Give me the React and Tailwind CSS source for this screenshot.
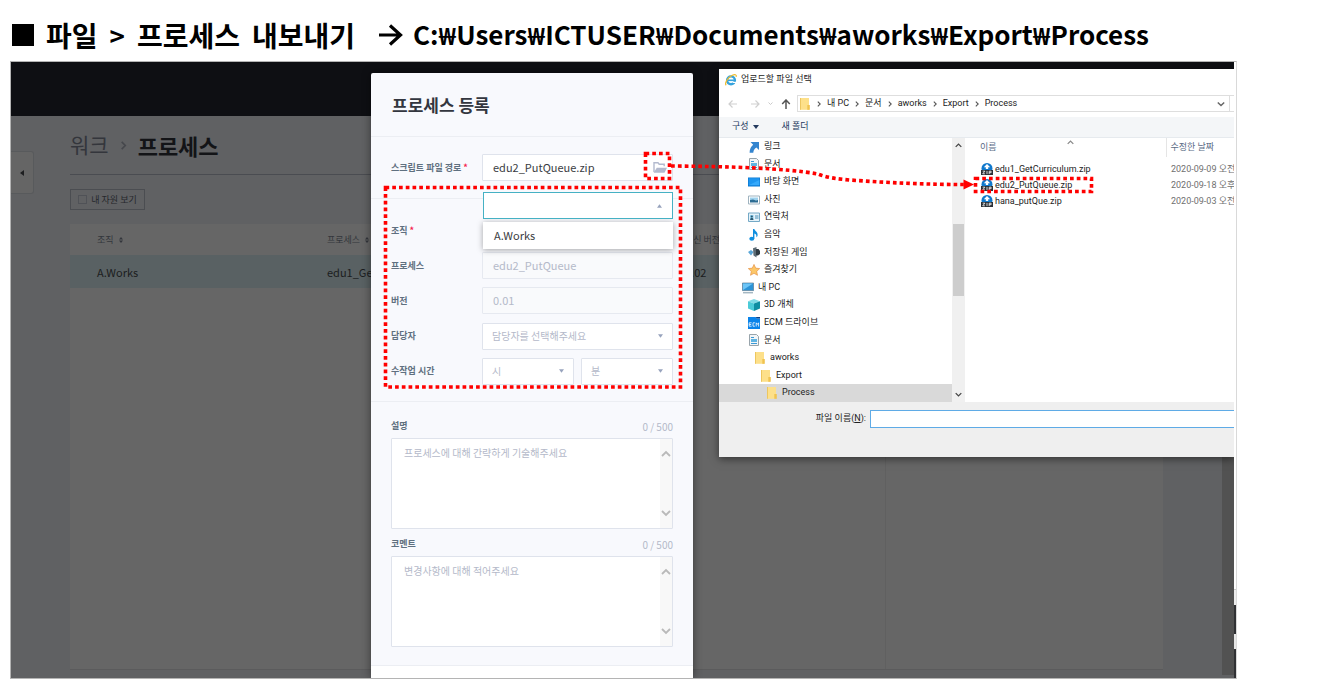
import React from "react";

const TREE = [
  { name: "링크", icon: "link", pad: "pl-[29px]" },
  { name: "문서", icon: "doc", pad: "pl-[29px]" },
  { name: "바탕 화면", icon: "desktop", pad: "pl-[29px]" },
  { name: "사진", icon: "picture", pad: "pl-[29px]" },
  { name: "연락처", icon: "contact", pad: "pl-[29px]" },
  { name: "음악", icon: "music", pad: "pl-[29px]" },
  { name: "저장된 게임", icon: "game", pad: "pl-[29px]" },
  { name: "즐겨찾기", icon: "star", pad: "pl-[29px]" },
  { name: "내 PC", icon: "pc", pad: "pl-[23px]" },
  { name: "3D 개체", icon: "cube", pad: "pl-[29px]" },
  { name: "ECM 드라이브", icon: "ecm", pad: "pl-[29px]" },
  { name: "문서", icon: "doc", pad: "pl-[29px]" },
  { name: "aworks", icon: "folder", pad: "pl-[35px]" },
  { name: "Export", icon: "folder", pad: "pl-[41px]" },
  { name: "Process", icon: "folder", pad: "pl-[47px]", selected: true },
];

const FILES = [
  { name: "edu1_GetCurriculum.zip", date: "2020-09-09 오전" },
  { name: "edu2_PutQueue.zip", date: "2020-09-18 오후" },
  { name: "hana_putQue.zip", date: "2020-09-03 오전" },
];

const PATH = ["내 PC", "문서", "aworks", "Export", "Process"];

const EXPORT_PATH = ["C:", "Users", "ICTUSER", "Documents", "aworks", "Export", "Process"];

function TreeIcon({ kind }) {
  return (
    <svg viewBox="0 0 12 12" className="size-3 shrink-0" aria-hidden="true">
      {kind === "link" && (
        <path d="M2.500 1H11v8L8.400 6.600C6.300 8 5.500 9.500 5.300 11.800H1.600C1.600 8 3 5.600 5.200 3.800Z" fill="#3485cf" />
      )}
      {kind === "doc" && (
        <g>
          <path d="M1.500.5h7l2 2v9h-9Z" fill="#f2f5f7" stroke="#98a4ab" strokeWidth="1" />
          <path d="M3 3.500h3M3 9.500h6" stroke="#3b9ad6" strokeWidth="1" />
          <path d="M3 5h6v3H3Z" fill="#5fb4e2" />
        </g>
      )}
      {kind === "desktop" && (
        <g>
          <path d="M0 1.500h12v9H0Z" fill="#0a78d0" />
          <path d="M.7 2.200h10.600v7H.7Z" fill="#1e96f0" />
          <path d="M.7 9.200 11.300 4v5.200Z" fill="#35a9fb" />
        </g>
      )}
      {kind === "picture" && (
        <g>
          <path d="M.5 2h11v8H.5Z" fill="#fff" stroke="#9fb3bf" />
          <path d="M2 3.500h8v3H2Z" fill="#9fd2ee" />
          <path d="M2 8.500V6l3-.5 3 1 2-.5v2.500Z" fill="#2c6c93" />
        </g>
      )}
      {kind === "contact" && (
        <g>
          <path d="M.5 2h11v8.500H.5Z" fill="#e5f2f9" stroke="#74a9c6" />
          <path d="M2 4h3.500v5H2Z" fill="#8fd0ee" />
          <circle cx="3.800" cy="5.500" r="1.100" fill="#2d5870" />
          <path d="M2.200 9c0-3 3.200-3 3.200 0Z" fill="#2d5870" />
          <path d="M7 5h3.500M7 7h3.500" stroke="#4a90b8" />
        </g>
      )}
      {kind === "music" && (
        <g fill="#0f8fe0">
          <ellipse cx="3.800" cy="9.700" rx="2.500" ry="2" />
          <path d="M5 0h1.400c.2 2 3.600 2.800 3.200 6.200-.1 1-.6 1.600-1.200 2.100.3-2.200-.4-3.300-2-3.900v5.300H5Z" />
        </g>
      )}
      {kind === "game" && (
        <g>
          <path d="M0 6l3-2 2.500 2L3 9.500Z" fill="#5aa7d8" />
          <path d="M5 2.200 8.500 1v10.500L5.500 9.500Z" fill="#5c6b75" />
          <path d="M8 3h2.500L12 5v3l-2 1.500H8Z" fill="#2e3a42" />
        </g>
      )}
      {kind === "star" && (
        <path d="m6 .4 1.700 3.700 4 .5-3 2.700.8 4L6 9.300 2.500 11.300l.8-4-3-2.700 4-.5Z" fill="#fcc768" stroke="#e0883a" strokeWidth=".6" />
      )}
      {kind === "pc" && (
        <g>
          <path d="M.4 1h11.200v7.600H.4Z" fill="#2c93d6" stroke="#5f7d90" strokeWidth=".7" />
          <path d="M1 1.500h10L1 8Z" fill="#6cc5f7" />
          <path d="M1 10.800h10" stroke="#7f99a8" strokeWidth="1" />
        </g>
      )}
      {kind === "cube" && (
        <g>
          <path d="M0 2.200 6 0l6 2.200L6 4.500Z" fill="#7fdbe6" />
          <path d="M0 2.200 6 4.500V12L0 9.600Z" fill="#4ccbd8" />
          <path d="M12 2.200 6 4.500V12l6-2.400Z" fill="#0e8ea2" />
        </g>
      )}
      {kind === "ecm" && (
        <g>
          <path d="M0 0h7.500L9 1.500h3V12H0Z" fill="#0a84ea" />
          <path d="M7.500 0H12v1.500H9Z" fill="#0a3f86" />
          <path d="M3.600 5.800H1.200v3.400h2.400M1.200 7.500h2M6.900 5.800H5v3.400h1.900M8.200 9.500V5.800l1.200 1.600 1.200-1.600v3.700" fill="none" stroke="#fff" strokeWidth=".8" />
        </g>
      )}
      {kind === "folder" && (
        <g>
          <path d="M1 0h9v11.800H1Z" fill="#fde08a" />
          <path d="M8.300 7h2.500v4.800H8.300Z" fill="#f0c350" />
          <path d="M1 0h.8v11.800H1Z" fill="#e9bf55" />
        </g>
      )}
    </svg>
  );
}

function ZipIcon() {
  return (
    <svg viewBox="0 0 12 12" className="size-3 shrink-0" aria-hidden="true">
      <circle cx="6" cy="5.500" r="5.500" fill="#0f78cc" />
      <path d="M6 .9 9.200 4.200h-2v1.900H4.800V4.200h-2Z" fill="#fff" />
      <path d="M0 7h12v5H0Z" fill="#2b3036" />
      <path d="M1.700 8.200h2.200l-2.200 2.600h2.200M6 7.900v3.200M8.200 11.100V8.200h1.900v1.500H8.200" fill="none" stroke="#fff" strokeWidth=".8" />
    </svg>
  );
}

function IeIcon() {
  return (
    <svg viewBox="0 0 12 12" className="size-3 shrink-0" aria-hidden="true">
      <circle cx="6" cy="6.300" r="3.900" fill="none" stroke="#35a3dd" strokeWidth="2.400" />
      <path d="M3 6.300h7.500" stroke="#35a3dd" strokeWidth="1.600" />
      <path d="M8 7.800h4v1.200H8Z" fill="#fff" />
      <path d="M1.200 11.200C-.8 9.500 2.800 3.400 7.300 1.300c2.500-1.200 4.600-.9 3.800 1.600" fill="none" stroke="#f0bb2b" strokeWidth="1.200" />
    </svg>
  );
}

function Caret({ up }) {
  return (
    <svg viewBox="0 0 6 4" className="pointer-events-none absolute top-1/2 right-[10px] h-1 w-[5px] -translate-y-1/2" aria-hidden="true">
      <path d={up ? "M0 4 3 0l3 4Z" : "M0 0h6L3 4Z"} fill="#97a3bd" />
    </svg>
  );
}

function Chevron({ dir, className }) {
  const d = { up: "M1 7l4-4 4 4", down: "M1 3l4 4 4-4", right: "M3 1l4 4-4 4" }[dir];
  return (
    <svg viewBox="0 0 10 10" className={className} aria-hidden="true">
      <path d={d} fill="none" stroke="currentColor" strokeWidth="1.800" />
    </svg>
  );
}

function SortIcon() {
  return (
    <svg viewBox="0 0 4 6" className="h-[6px] w-1" aria-hidden="true">
      <path d="M0 2.400 2 0l2 2.400ZM0 3.600h4L2 6Z" fill="#33363c" />
    </svg>
  );
}

function Field({ id, label, required, children }) {
  return (
    <div className="flex h-[27px] items-center">
      <label htmlFor={id} className="w-[91px] shrink-0 text-[9px] font-bold whitespace-nowrap text-[#5f7080]">
        {label}
        {required && <span className="ml-[2px] text-[#f5224d]">*</span>}
      </label>
      <div className="flex min-w-0 flex-1 gap-[7px]">{children}</div>
    </div>
  );
}

function Select({ id, text, label }) {
  return (
    <div className="relative flex-1">
      <select
        id={id}
        aria-label={label}
        className="h-[27px] w-full appearance-none rounded-[1px] border border-[#dfe3ec] bg-white pb-[2px] pl-[9px] text-[10px] text-[#b4b9c9] outline-none"
      >
        <option>{text}</option>
      </select>
      <Caret />
    </div>
  );
}

function NoteField({ id, label, placeholder }) {
  return (
    <div>
      <div className="flex h-[18px] items-center justify-between">
        <label htmlFor={id} className="text-[9px] font-bold text-[#5f7080]">{label}</label>
        <span className="text-[10px] text-[#b4b9c9]">0 / 500</span>
      </div>
      <div className="mt-[3px] flex h-[91px] rounded-[1px] border border-[#dfe3ec] bg-white">
        <textarea
          id={id}
          placeholder={placeholder}
          className="min-w-0 flex-1 resize-none overflow-hidden pt-[6px] pl-3 text-[10px] leading-4 outline-none placeholder:text-[#b4b9c9]"
        />
        <div className="flex w-3 flex-col items-center justify-between bg-[#f8f8f8] py-[10px] text-[#b9b9b9]">
          <Chevron dir="up" className="size-[10px]" />
          <Chevron dir="down" className="size-[10px]" />
        </div>
      </div>
    </div>
  );
}

function WorkPage() {
  return (
    <div className="flex flex-col bg-[#606163] [grid-area:1/1]">
      <div className="h-[54px] shrink-0 bg-[#0e0f13]" />
      <div className="flex flex-1">
        <div className="w-[59px] shrink-0 pt-[35px]">
          <button type="button" aria-label="메뉴 열기" className="flex h-[43px] w-[23px] items-center justify-center rounded-r-[3px] border border-l-0 border-[#585a5c] bg-[#656565]">
            <svg viewBox="0 0 4 6" className="h-[6px] w-1" aria-hidden="true"><path d="M4 0v6L0 3Z" fill="#1d1e20" /></svg>
          </button>
        </div>
        <div className="flex min-w-0 flex-1 flex-col">
          <h2 className="flex h-[59px] items-center border-b border-[#4a4c51] text-[21px] text-[#34363c]">
            <span>워크</span>
            <Chevron dir="right" className="mx-[10px] size-[9px] text-[#45474c]" />
            <span className="text-[22px] font-bold text-[#131417]">프로세스</span>
          </h2>
          <label className="mt-[14px] flex h-[21px] w-[75px] items-center justify-center gap-1 border border-[#4b4d51] text-[9px] text-[#26282c]">
            <input type="checkbox" className="size-[9px] appearance-none border border-[#505257]" />
            내 자원 보기
          </label>
          <div className="mt-[14px] mb-2 flex flex-1 flex-col border-b border-[#5b5b5c] bg-[#666666]">
            <table className="w-full table-fixed text-left">
              <thead>
                <tr className="h-[31px] text-[9px] text-[#33363c]">
                  {["조직", "프로세스"].map((t, i) => (
                    <th key={t} className={i === 0 ? "w-[257px] pl-[27px] font-normal" : "w-[358px] font-normal"}>
                      <span className="flex items-center gap-[5px]">{t}<SortIcon /></span>
                    </th>
                  ))}
                  <th className="font-normal">최신 버전</th>
                </tr>
              </thead>
              <tbody>
                <tr className="h-[33px] bg-[#596163] text-[11px] leading-4 text-[#1b1d20]">
                  <td className="pl-[27px]">A.Works</td>
                  <td>edu1_Get</td>
                  <td>0.02</td>
                </tr>
              </tbody>
            </table>
            <div className="w-[816px] flex-1 border-r border-[#606060]" />
          </div>
        </div>
        <div className="w-[59px] shrink-0" />
        <div className="mb-[3px] w-3 shrink-0 bg-[#525252]" />
      </div>
    </div>
  );
}

function RegisterModal() {
  return (
    <section className="z-10 mt-[11px] ml-[360px] w-[322px] rounded-t-[2px] bg-[#f8f9fd] shadow-[0_0_10px_rgba(0,0,0,0.45)] [grid-area:1/1]">
      <h3 className="flex h-16 items-center border-b border-[#eceef3] pl-[21px] text-[17px] font-bold text-[#33363f]">프로세스 등록</h3>
      <div className="border-b border-[#eceef3] px-[20px] pt-[17px] pb-[17px]">
        <Field id="script" label="스크립트 파일 경로" required>
          <div className="flex h-[27px] w-full items-center rounded-[1px] border border-[#dfe3ec] bg-white pr-[5px] pl-[10px]">
            <input id="script" defaultValue="edu2_PutQueue.zip" className="min-w-0 flex-1 bg-transparent text-[11px] text-[#3a3c42] outline-none" />
            <button type="button" aria-label="파일 찾기">
              <svg viewBox="0 0 14 11" className="h-[11px] w-[14px]" aria-hidden="true">
                <path d="M1 10V.8h4l1.200 1.500h5v2" fill="none" stroke="#b3bace" strokeWidth="1.400" />
                <path d="M3.800 5.700H14L11.500 10.700H.6Z" fill="#b3bace" />
              </svg>
            </button>
          </div>
        </Field>
      </div>
      <div className="flex flex-col gap-2 border-b border-[#eceef3] px-[20px] pt-[18px] pb-[17px]">
        <Field id="org" label="조직" required>
          <div className="relative h-[27px] flex-1">
            <div className="absolute -top-[25px] right-0 left-px z-10">
              <button id="org" type="button" aria-expanded="true" aria-label="조직 선택" className="relative block h-[27px] w-full border border-[#45b1c4] bg-white">
                <Caret up />
              </button>
              <ul role="listbox" className="mt-[3px] bg-white shadow-[0_1px_6px_rgba(0,0,0,0.35)]">
                <li role="option" aria-selected="false" className="flex h-[27px] items-center pl-[11px] text-[11px] text-[#3a3c42]">A.Works</li>
              </ul>
            </div>
          </div>
        </Field>
        <Field id="proc" label="프로세스">
          <input id="proc" disabled defaultValue="edu2_PutQueue" className="h-[27px] w-full rounded-[1px] border border-[#e6e9f0] bg-[#f9fafc] pb-[2px] pl-[10px] text-[11px] text-[#b4b9c9]" />
        </Field>
        <Field id="ver" label="버전">
          <input id="ver" disabled defaultValue="0.01" className="h-[27px] w-full rounded-[1px] border border-[#e6e9f0] bg-[#f9fafc] pb-[2px] pl-[10px] text-[11px] text-[#b4b9c9]" />
        </Field>
        <Field id="owner" label="담당자">
          <Select id="owner" text="담당자를 선택해주세요" />
        </Field>
        <Field id="hour" label="수작업 시간">
          <Select id="hour" text="시" />
          <Select id="minute" text="분" label="분" />
        </Field>
      </div>
      <div className="flex flex-col gap-[6px] border-b border-[#eceef3] px-[20px] pt-[15px] pb-[18px]">
        <NoteField id="desc" label="설명" placeholder="프로세스에 대해 간략하게 기술해주세요" />
        <NoteField id="comment" label="코멘트" placeholder="변경사항에 대해 적어주세요" />
      </div>
      <div className="h-3 bg-white" />
    </section>
  );
}

function FileDialog() {
  return (
    <section className="z-10 mt-[7px] ml-[708px] flex min-w-0 flex-col self-start overflow-hidden bg-white font-['Roboto','Noto_Sans_CJK_KR',sans-serif] text-[9px] whitespace-nowrap text-[#222] shadow-[0_2px_8px_rgba(0,0,0,0.5)] [grid-area:1/1]">
      <h3 className="flex h-[22px] items-center gap-1 pl-[6px]">
        <IeIcon />
        업로드할 파일 선택
      </h3>
      <div className="flex h-[26px] items-start pt-1">
        <div className="flex h-[17px] w-[78px] shrink-0 items-center gap-3 pl-[9px]">
          {["M9 5H1M4.500 1.500 1 5l3.500 3.500", "M1 5h8M5.500 1.500 9 5 5.500 8.500"].map((d) => (
            <svg key={d} viewBox="0 0 10 10" className="size-[10px]" aria-hidden="true"><path d={d} fill="none" stroke="#cfcfcf" strokeWidth="1.200" /></svg>
          ))}
          <Chevron dir="down" className="-mx-1 size-[5px] text-[#c4c4c4]" />
          <svg viewBox="0 0 10 10" className="size-[10px]" aria-hidden="true"><path d="M5 10V1M1.200 5 5 1l3.800 4" fill="none" stroke="#555" strokeWidth="1.500" /></svg>
        </div>
        <nav className="flex h-[17px] min-w-0 flex-1 items-center border border-r-0 border-[#dedede] pl-px">
          <TreeIcon kind="folder" />
          {PATH.map((p) => (
            <span key={p} className="flex items-center">
              <Chevron dir="right" className="mx-[5px] size-[6px] text-[#555]" />
              {p}
            </span>
          ))}
          <Chevron dir="down" className="mr-[4px] ml-auto size-2 text-[#666]" />
          <span className="h-full w-[5px] border-l border-[#dedede]" />
        </nav>
      </div>
      <div className="flex h-[21px] items-center gap-[23px] border-b border-[#e6eaee] bg-[#f4f6f8] pl-[13px] text-[#243a5e]">
        <button type="button" className="flex items-center gap-1">
          구성
          <svg viewBox="0 0 6 4" className="h-1 w-[6px]" aria-hidden="true"><path d="M0 0h6L3 4Z" fill="#243a5e" /></svg>
        </button>
        <button type="button">새 폴더</button>
      </div>
      <div className="flex h-[264px]">
        <ul className="flex w-[233px] shrink-0 flex-col">
          {TREE.map((t, i) => (
            <li key={i} className={`flex min-h-0 flex-1 items-center gap-1 ${t.pad} ${t.selected ? "bg-[#d9d9d9]" : ""}`}>
              <TreeIcon kind={t.icon} />
              {t.name}
            </li>
          ))}
        </ul>
        <div className="flex w-[13px] shrink-0 flex-col items-center bg-[#f0f0f0] py-1 text-[#444]">
          <Chevron dir="up" className="size-[7px]" />
          <div className="mt-[75px] h-[72px] w-[11px] bg-[#cdcdcd]" />
          <Chevron dir="down" className="mt-auto size-[7px]" />
        </div>
        <div className="relative min-w-0 flex-1 overflow-hidden">
          <Chevron dir="up" className="absolute top-px left-[102px] size-[7px] text-[#888]" />
          <table className="w-full table-fixed text-left">
            <thead>
              <tr className="h-[19px] text-[#5a6b85]">
                <th className="w-[201px] border-r border-[#e5e5e5] p-0 pl-[15px] font-normal">이름</th>
                <th className="p-0 pl-1 font-normal">수정한 날짜</th>
              </tr>
              <tr className="h-1"><th /></tr>
            </thead>
            <tbody>
              {FILES.map((f) => (
                <tr key={f.name} className="h-[16px] leading-[15px]">
                  <td className="p-0 pl-4"><span className="flex items-center gap-[2px]"><ZipIcon />{f.name}</span></td>
                  <td className="overflow-hidden p-0 pl-[5px] text-[#6f6f6f]">{f.date}</td>
                </tr>
              ))}
            </tbody>
          </table>
        </div>
      </div>
      <div className="flex h-[55px] items-start bg-[#efefef] pt-2">
        <label htmlFor="filename" className="w-[151px] shrink-0 pr-1 text-right leading-[17px]">파일 이름(<u>N</u>):</label>
        <input id="filename" className="h-[18px] min-w-0 flex-1 border border-r-0 border-[#5fabe6] bg-white px-1 outline-none" />
      </div>
    </section>
  );
}

function Callouts() {
  return (
    <svg viewBox="0 0 1227 618" className="pointer-events-none absolute -top-px -left-px z-20 h-[618px] w-[1227px]" aria-hidden="true">
      <g transform="translate(-10 -61)" fill="none" stroke="#ff0000" strokeWidth="3.600" strokeDasharray="3.700 3.050">
        <rect x="645.500" y="153.500" width="24" height="25" />
        <rect x="385.500" y="187.500" width="295" height="199.500" />
        <rect x="975.500" y="178.500" width="116" height="13" />
        <path d="M671 166C730 166.500 785 168 818 174C826 177.500 838 179 850 180C890 183 930 184.500 964 184.500" />
        <path d="M963.500 179.500v10l10.500-5Z" fill="#ff0000" stroke="none" />
      </g>
    </svg>
  );
}

export default function App() {
  return (
    <main className="min-h-screen bg-white font-['Noto_Sans_CJK_KR','Noto_Sans',sans-serif]">
      <h1 className="flex h-[61px] items-center pt-2 pl-3 text-[28px] leading-none font-bold whitespace-nowrap text-black">
        <span className="mr-3 size-[22px] bg-black" />
        <span className="flex items-center gap-3">
          <span>파일</span>
          <span className="text-[26px]">&gt;</span>
          <span>프로세스</span>
          <span>내보내기</span>
        </span>
        <svg viewBox="0 0 24 22" className="mr-[10px] ml-6 h-[22px] w-6" aria-hidden="true">
          <path d="M0 11h21M11 1.500 21.500 11 11 20.500" fill="none" stroke="#000" strokeWidth="3.200" />
        </svg>
        <span className="text-[26px]">
          {EXPORT_PATH.map((part, i) => (
            <React.Fragment key={part}>
              {i > 0 && <span className="font-['Noto_Sans',sans-serif] text-[24px]">₩</span>}
              {part}
            </React.Fragment>
          ))}
        </span>
      </h1>
      <div className="relative mr-[104px] ml-[10px] flex border border-[#b4b4b4] border-r-[#d9d9d9]">
        <div className="grid min-w-0 flex-1 grid-cols-1 overflow-hidden">
          <WorkPage />
          <RegisterModal />
          <FileDialog />
        </div>
        <div className="flex w-[2px] shrink-0 flex-col bg-white">
          <div className="flex-1" />
          <div className="h-4 border-t border-[#c9c9c9] bg-[#ededed]" />
          <div className="h-[29px] bg-[#303134]" />
          <div className="h-[15px] bg-[#e6e6e6]" />
          <div className="h-[29px] bg-[#303134]" />
        </div>
        <Callouts />
      </div>
    </main>
  );
}
